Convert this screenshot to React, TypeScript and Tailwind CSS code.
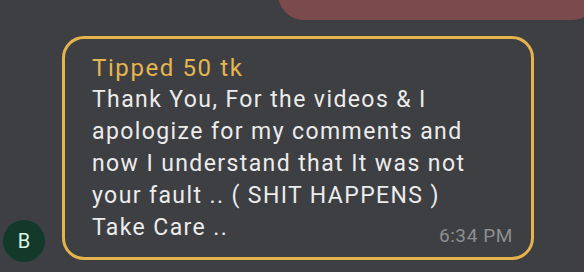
import React from "react";

export default function App() {
  const lines = [
    "Thank You, For the videos & I",
    "apologize for my comments and",
    "now I understand that It was not",
    "your fault .. ( SHIT HAPPENS )",
  ];
  return (
    <div
      className="w-[584px] h-[272px] overflow-hidden bg-[#3e3f42] flex flex-col"
      style={{ fontFamily: "Roboto, 'Noto Sans', sans-serif" }}
    >
      <div className="flex justify-end">
        <div className="w-[320px] h-[60px] mt-[-40px] mr-[-14px] rounded-[26px] bg-[#7b4a4d] shrink-0" />
      </div>
      <div className="flex items-end pl-[3px] mt-[16px]">
        <div className="w-[42px] h-[42px] mb-[-2px] rounded-full bg-[#13392b] flex items-center justify-center text-[#d9f5e6] text-[20px]">
          B
        </div>
        <div className="ml-[17px] w-[472px] h-[224px] border-[3px] border-[#e4b34d] rounded-[22px] pl-[27px] pr-[18px] pt-[13px] text-[23px] leading-[32px] tracking-[1.4px] text-[#ececec]">
          <div className="text-[#e5b550] text-[24px] tracking-[1.6px]">Tipped 50 tk</div>
          {lines.map((l) => (
            <div key={l} className="whitespace-pre">{l}</div>
          ))}
          <div className="flex items-end justify-between">
            <span>Take Care ..</span>
            <span className="text-[19px] leading-[16px] tracking-[0.6px] text-[#8d8e91]">6:34 PM</span>
          </div>
        </div>
      </div>
    </div>
  );
}
